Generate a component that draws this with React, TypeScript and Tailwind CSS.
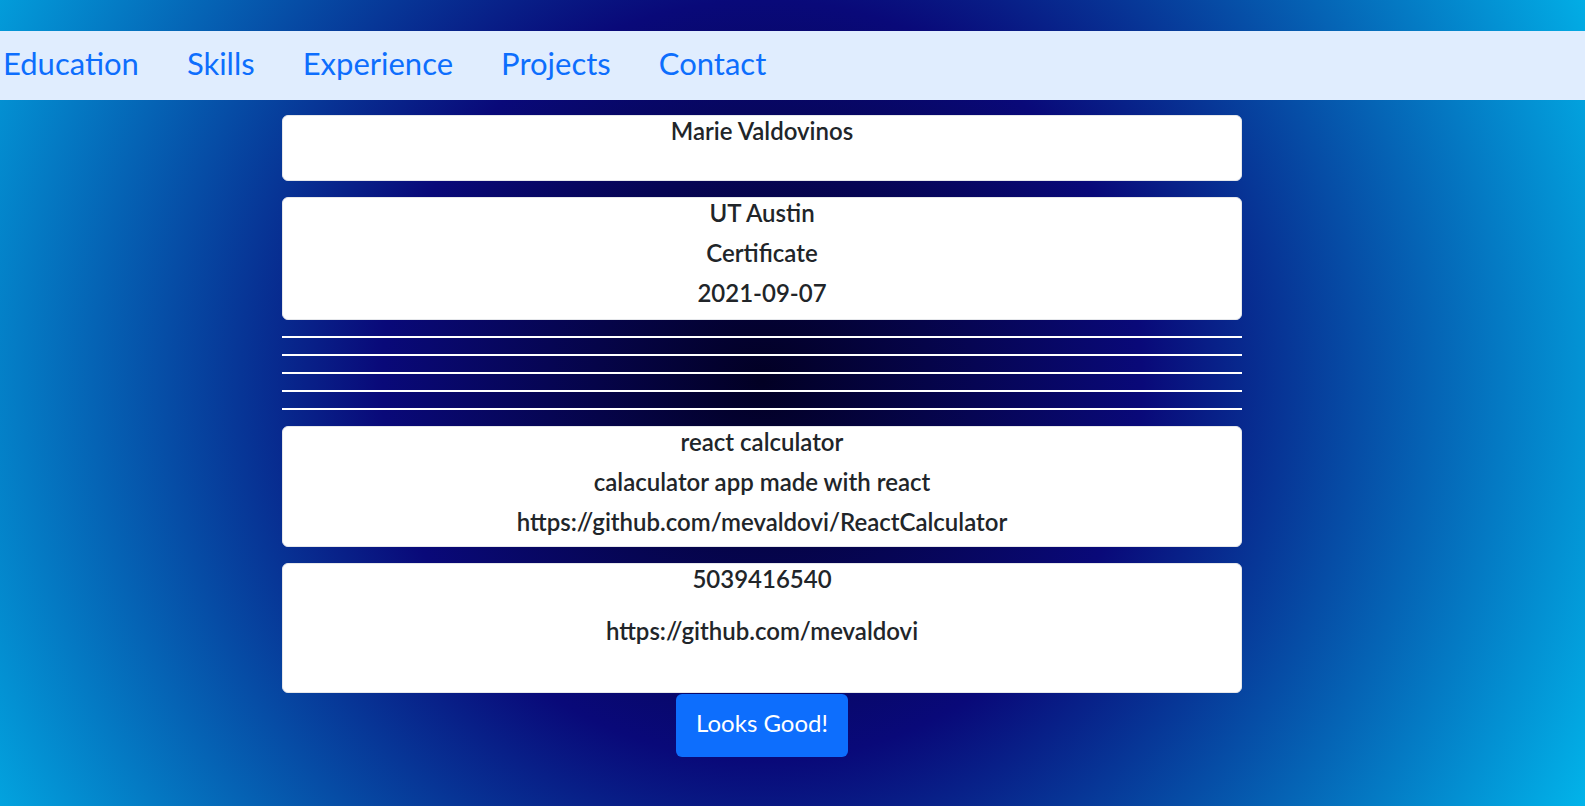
import React from 'react';

const links = ['Education', 'Skills', 'Experience', 'Projects', 'Contact'];

function Line({ children }: { children?: React.ReactNode }) {
  return <h4 className="h-[40px] text-[24px] leading-[29px] font-semibold text-[#212529]">{children}</h4>;
}

export default function App() {
  return (
    <div className="min-h-screen h-[806px] overflow-hidden bg-[image:radial-gradient(circle_at_762px_380px,#020024_0px,#090979_380px,#00d4ff_1030px)] font-['Lato',sans-serif]">
      {/* Top nav */}
      <nav className="mt-[31px] h-[69px] bg-[#e0edfe] flex items-center pl-[3px] pb-[4px] gap-[48px]">
        {links.map((l) => (
          <a key={l} href="#" className="text-[31px] leading-[45px] text-[#0d6efd]">
            {l}
          </a>
        ))}
      </nav>

      <main className="ml-[282px] w-[960px] mt-[15px] flex flex-col">
        <div className="flex flex-col gap-4 text-center">
          <div className="h-[66px] bg-white rounded-[6px] border border-[#e5e7eb]">
            <Line>Marie Valdovinos</Line>
          </div>
          <div className="h-[123px] bg-white rounded-[6px] border border-[#e5e7eb]">
            <Line>UT Austin</Line>
            <Line>Certificate</Line>
            <Line>2021-09-07</Line>
          </div>
          {/* empty cards */}
          <div className="h-[2px] bg-white" />
          <div className="h-[2px] bg-white" />
          <div className="h-[2px] bg-white" />
          <div className="h-[2px] bg-white" />
          <div className="h-[2px] bg-white" />
          <div className="h-[121px] bg-white rounded-[6px] border border-[#e5e7eb]">
            <Line>react calculator</Line>
            <Line>calaculator app made with react</Line>
            <Line>https://github.com/mevaldovi/ReactCalculator</Line>
          </div>
          <div className="h-[130px] bg-white rounded-[6px] border border-[#e5e7eb]">
            <Line>5039416540</Line>
            <div className="mt-[12px]">
              <Line>https://github.com/mevaldovi</Line>
            </div>
          </div>
        </div>
        <button className="self-center mt-[1px] w-[172px] h-[63px] pb-[5px] rounded-[6px] bg-[#0d6efd] text-white text-[24px]">
          Looks Good!
        </button>
      </main>
    </div>
  );
}
